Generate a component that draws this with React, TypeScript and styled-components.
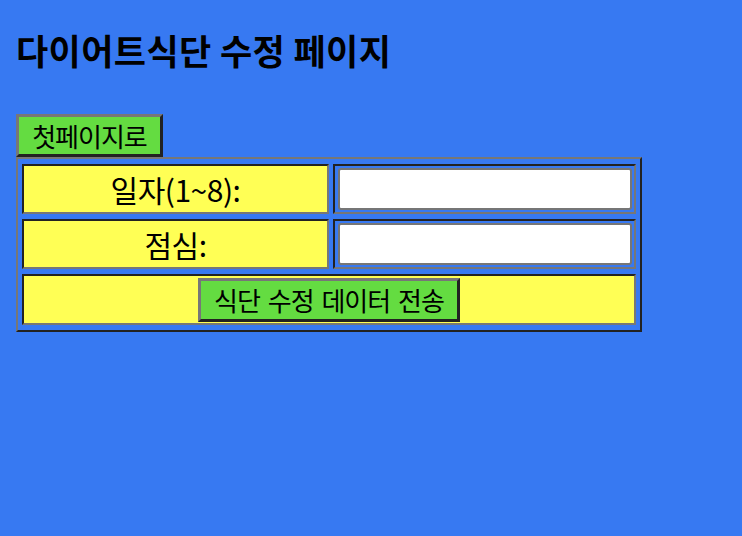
import React from "react";
import styled, { createGlobalStyle } from "styled-components";

const GlobalStyle = createGlobalStyle`
  html, body {
    margin: 0;
    padding: 0;
    background: #3779f2;
  }
  body {
    font-family: "Noto Sans CJK KR", "Noto Sans", sans-serif;
    color: #000;
    min-height: 536px;
  }
`;

const Page = styled.main`
  padding: 0 16px;
  min-height: 536px;
  box-sizing: border-box;
  display: flex;
  flex-direction: column;
  align-items: flex-start;
`;

const Title = styled.h1`
  margin: 32px 0 0;
  font-size: 35px;
  line-height: 35px;
  font-weight: 700;
  letter-spacing: 0.4px;
`;

const RaisedButton = styled.button<{ $w: number; $h: number }>`
  box-sizing: border-box;
  width: ${(p) => p.$w}px;
  height: ${(p) => p.$h}px;
  padding: 0;
  margin: 0;
  background: #64dc41;
  color: #000;
  font-family: "Noto Sans CJK KR", "Noto Sans", sans-serif;
  font-size: 26px;
  line-height: 1;
  letter-spacing: -1px;
  word-spacing: 3px;
  white-space: nowrap;
  border-style: solid;
  border-width: 3px;
  border-color: #777 #222 #222 #777;
  cursor: pointer;
`;

const HomeButton = styled(RaisedButton)`
  margin-top: 47px;
`;

const FormTable = styled.table`
  width: 626px;
  table-layout: fixed;
  border-collapse: separate;
  border-spacing: 4px 5px;
  border-style: solid;
  border-width: 2px;
  border-color: #777 #222 #222 #777;
`;

const Cell = styled.td<{ $yellow?: boolean; $w?: number }>`
  box-sizing: border-box;
  ${(p) => (p.$w ? `width: ${p.$w}px;` : "")}
  background: ${(p) => (p.$yellow ? "#ffff55" : "transparent")};
  border-style: solid;
  border-width: 2px;
  border-color: #222 #777 #777 #222;
  vertical-align: middle;
`;

const LabelCell = styled(Cell)`
  text-align: center;
  font-size: 30px;
  line-height: 1;
  padding: 0;
  letter-spacing: -0.5px;
`;

const InputCell = styled(Cell)`
  padding: 2px 2px 2px 3px;
`;

const SubmitCell = styled(Cell)`
  text-align: center;
  padding: 2px 1px 1px;
`;

const TextInput = styled.input`
  display: block;
  box-sizing: border-box;
  width: 294px;
  height: 42px;
  margin: 0;
  border: 2px solid #767676;
  border-radius: 3px;
  background: #fff;
  font-family: "Noto Sans CJK KR", sans-serif;
  font-size: 18px;
  padding: 0 6px;
`;

const SubmitButton = styled(RaisedButton)`
  display: inline-block;
  vertical-align: middle;
`;

export default function App() {
  return (
    <>
      <GlobalStyle />
      <Page>
        <Title>다이어트식단 수정 페이지</Title>
        <HomeButton type="button" $w={147} $h={43}>
          첫페이지로
        </HomeButton>
        <form onSubmit={(e) => e.preventDefault()}>
          <FormTable>
            <tbody>
              <tr>
                <LabelCell $yellow $w={307}>
                  일자(1~8):
                </LabelCell>
                <InputCell $w={303}>
                  <TextInput type="text" name="day" />
                </InputCell>
              </tr>
              <tr>
                <LabelCell $yellow>점심:</LabelCell>
                <InputCell>
                  <TextInput type="text" name="lunch" />
                </InputCell>
              </tr>
              <tr>
                <SubmitCell $yellow colSpan={2}>
                  <SubmitButton type="submit" $w={262} $h={44}>
                    식단 수정 데이터 전송
                  </SubmitButton>
                </SubmitCell>
              </tr>
            </tbody>
          </FormTable>
        </form>
      </Page>
    </>
  );
}
